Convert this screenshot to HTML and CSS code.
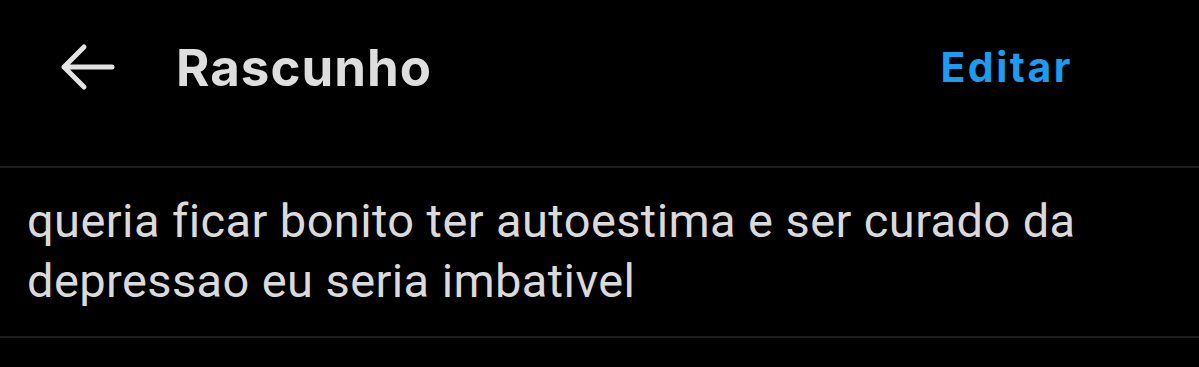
FILE: index.html
```html
<!DOCTYPE html>
<html lang="pt">

<head>
    <meta charset="UTF-8">
    <meta name="viewport" content="width=device-width, initial-scale=1.0">
    <title>Rascunho</title>
    <link rel="stylesheet" href="styles.css">
</head>

<body>
    <header class="top-bar">
        <button class="back-button" aria-label="Voltar">
            <svg width="56" height="48" viewBox="0 0 56 48" fill="none" stroke="currentColor" stroke-width="5" stroke-linecap="round" stroke-linejoin="round">
                <path d="M52 24H4M24 4L4 24l20 20" />
            </svg>
        </button>
        <h1 class="title">Rascunho</h1>
        <a class="edit-link" href="#">Editar</a>
    </header>

    <div class="draft-item">
        <p class="draft-text">queria ficar bonito ter autoestima e ser curado da depressao eu seria imbativel</p>
    </div>
</body>

</html>
```

FILE: styles.css
```css
body {
    margin: 0;
    background-color: #000;
    color: #dcdcdc;
    font-family: Roboto, "Noto Sans", sans-serif;
}

.top-bar {
    display: flex;
    align-items: center;
    height: 90px;
    padding: 22px 126px 54px 60px;
    border-bottom: 2px solid #1c1c1c;
}

.back-button {
    display: flex;
    background: none;
    border: none;
    padding: 0;
    color: #e3e3e3;
    cursor: pointer;
}

.title {
    flex: 1;
    margin: 0 0 0 60px;
    font-family: Inter, Roboto, sans-serif;
    font-size: 51px;
    font-weight: 700;
    letter-spacing: 1px;
    color: #dedede;
}

.edit-link {
    color: #1d9bf0;
    text-decoration: none;
    font-family: Inter, Roboto, sans-serif;
    font-size: 41px;
    font-weight: 700;
    letter-spacing: 2.5px;
}

.draft-item {
    padding: 23px 27px 25px;
    border-bottom: 2px solid #1c1c1c;
}

.draft-text {
    margin: 0;
    font-size: 47px;
    line-height: 60px;
    letter-spacing: 0.4px;
    color: #dadada;
}
```
